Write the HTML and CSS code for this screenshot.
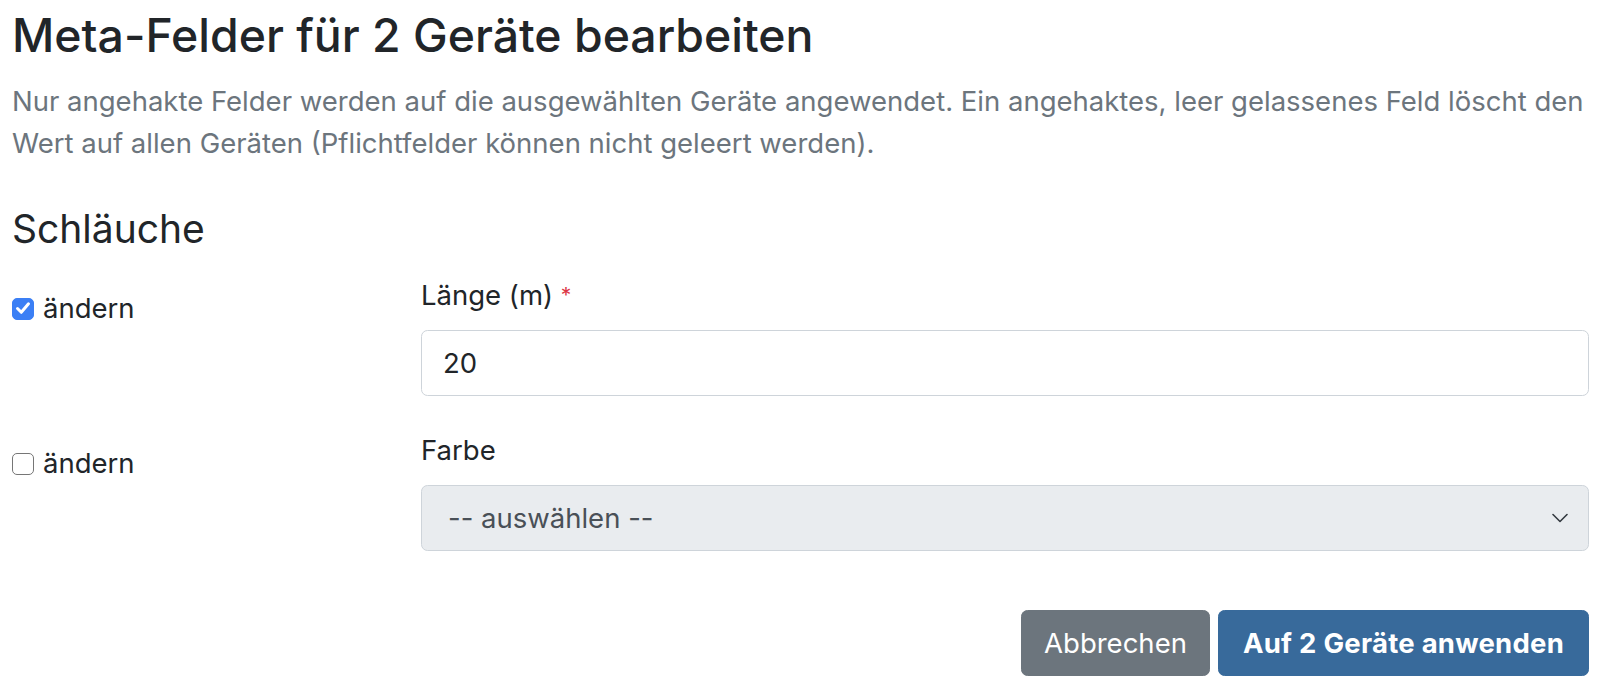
FILE: index.html
```html
<!DOCTYPE html>
<html lang="de">
<head>
<meta charset="utf-8">
<title>Meta-Felder bearbeiten</title>
<link rel="stylesheet" href="styles.css">
</head>
<body>
<main class="page">
  <h3 class="title">Meta-Felder für 2 Geräte bearbeiten</h3>
  <p class="intro">Nur angehakte Felder werden auf die ausgewählten Geräte angewendet. Ein angehaktes, leer gelassenes Feld löscht den Wert auf allen Geräten (Pflichtfelder können nicht geleert werden).</p>

  <h4 class="section">Schläuche</h4>

  <div class="field-row">
    <label class="check">
      <span class="box checked"><svg viewBox="0 0 22 22" width="22" height="22"><path d="M5.5 11.5 L9.3 15.3 L16.5 6.8" fill="none" stroke="#fff" stroke-width="3" stroke-linecap="round" stroke-linejoin="round"/></svg></span>
      <span class="check-text">ändern</span>
    </label>
    <div class="field">
      <div class="label">Länge (m) <span class="req">*</span></div>
      <input class="control" type="text" value="20">
    </div>
  </div>

  <div class="field-row">
    <label class="check">
      <span class="box"></span>
      <span class="check-text">ändern</span>
    </label>
    <div class="field">
      <div class="label">Farbe</div>
      <div class="control select">
        <span>-- auswählen --</span>
        <svg class="chev" viewBox="0 0 16 10" width="16" height="10"><path d="M1 1.5 L8 8.5 L15 1.5" fill="none" stroke="#343a40" stroke-width="1.6" stroke-linecap="round" stroke-linejoin="round"/></svg>
      </div>
    </div>
  </div>

  <div class="actions">
    <button class="btn btn-secondary" type="button">Abbrechen</button>
    <button class="btn btn-primary" type="button">Auf 2 Geräte anwenden</button>
  </div>
</main>
</body>
</html>
```
FILE: styles.css
```css
* { box-sizing: border-box; }
html, body { margin: 0; background: #fff; }
body {
  font-family: Inter, "Liberation Sans", Arial, sans-serif;
  color: #212529;
  font-size: 27.5px;
  line-height: 39px;
}
.page {
  padding: 8px 11px 0 12px;
}
.title {
  font-size: 46.4px;
  line-height: 55px;
  font-weight: 500;
  margin: 0 0 17px;
  color: #212529;
}
.intro {
  margin: 0 0 41px;
  color: #6c757d;
  line-height: 42px;
}
.section {
  font-size: 39px;
  line-height: 47px;
  font-weight: 400;
  margin: 0 0 24px;
}
.field-row {
  display: grid;
  grid-template-columns: 385px 1fr;
  column-gap: 24px;
  margin-bottom: 35px;
}
.check {
  display: flex;
  align-items: center;
  gap: 9px;
  padding-top: 13px;
  height: 52px;
  align-self: start;
}
.box {
  width: 22px;
  height: 22px;
  border-radius: 5px;
  border: 1.5px solid #767676;
  background: #fff;
  display: flex;
  flex: none;
}
.box.checked {
  background: #3b7ff5;
  border-color: #3b7ff5;
}
.box svg { display: block; margin: -1.5px; }
.check-text { line-height: 39px; }
.field {
  display: flex;
  flex-direction: column;
}
.label {
  margin-bottom: 15px;
}
.req {
  color: #dc3545;
  font-size: 21px;
  vertical-align: top;
}
.control {
  height: 66px;
  width: 100%;
  border: 1.6px solid #ced4da;
  border-radius: 6.5px;
  padding: 0 21px;
  font: inherit;
  color: #212529;
  background: #fff;
}
.select {
  display: flex;
  align-items: center;
  justify-content: space-between;
  background: #e9ecef;
  color: #495057;
  padding: 0 20px 0 26px;
}
.chev { display: block; }
.actions {
  display: flex;
  justify-content: flex-end;
  gap: 8px;
  margin-top: 59px;
}
.btn {
  height: 66px;
  font: inherit;
  border-radius: 6.5px;
  border: 1.6px solid transparent;
  color: #fff;
  padding: 0 16px;
}
.btn-secondary {
  background: #6c757d;
  border-color: #6c757d;
  width: 189px;
}
.btn-primary {
  background: #386a9b;
  border-color: #386a9b;
  font-weight: 700;
  letter-spacing: 0.25px;
  width: 371px;
}
```
